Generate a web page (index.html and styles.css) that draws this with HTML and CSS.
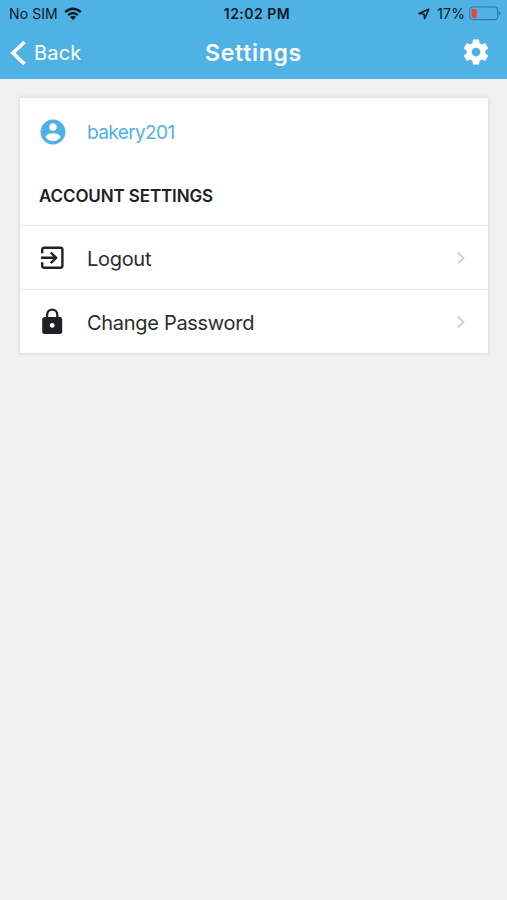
FILE: index.html
```html
<!DOCTYPE html>
<html lang="en">
<head>
<meta charset="utf-8">
<title>Settings</title>
<link rel="stylesheet" href="styles.css">
</head>
<body>
<header class="header">
  <div class="status">
    <div class="carrier"><span class="carrier-name">No SIM</span>
      <svg class="wifi" width="18" height="14" viewBox="0 0 18 14"><g fill="none" stroke="#0b1a24" stroke-width="2.4"><path d="M1.2 5.1Q9-1.7 16.8 5.1"/><path d="M4.1 8.2Q9 3.9 13.9 8.2"/></g><path d="M6 10Q9 7.6 12 10L9 13Z" fill="#0b1a24"/></svg>
    </div>
    <time class="time">12:02 PM</time>
    <div class="power">
      <svg class="location" width="12" height="12" viewBox="0 0 12 12"><path d="M1 5.5 10.8 1.2 6.6 10.8 6 6Z" fill="none" stroke="#0b1a24" stroke-width="1.5" stroke-linejoin="round"/></svg>
      <span class="percent">17%</span>
      <svg class="battery" width="32" height="15" viewBox="0 0 32 15"><rect x=".8" y="1" width="27.8" height="12.6" rx="3.2" fill="none" stroke="#35789c" stroke-width="1.1"/><rect x="2.7" y="2.9" width="5" height="8.9" rx="1.2" fill="#f53b38"/><path d="M29.7 5.2q2 .5 2 2.1t-2 2.1z" fill="#35789c"/></svg>
    </div>
  </div>
  <nav class="nav">
    <a class="back"><svg class="back-arrow" width="17" height="26" viewBox="0 0 17 26"><path d="M14.5 2 3 13 14.5 24" fill="none" stroke="#fff" stroke-width="3.7"/></svg><span class="back-label">Back</span></a>
    <h1 class="title">Settings</h1>
    <svg class="gear" width="30" height="30" viewBox="0 0 24 24" fill="#fff"><path d="M19.43 12.98c.04-.32.07-.64.07-.98s-.03-.66-.07-.98l2.11-1.65c.19-.15.24-.42.12-.64l-2-3.46c-.12-.22-.39-.3-.61-.22l-2.49 1c-.52-.4-1.08-.73-1.69-.98l-.38-2.65C14.46 2.18 14.25 2 14 2h-4c-.25 0-.46.18-.49.42l-.38 2.65c-.61.25-1.17.59-1.69.98l-2.49-1c-.23-.09-.49 0-.61.22l-2 3.46c-.13.22-.07.49.12.64l2.11 1.65c-.04.32-.07.65-.07.98s.03.66.07.98l-2.11 1.65c-.19.15-.24.42-.12.64l2 3.46c.12.22.39.3.61.22l2.49-1c.52.4 1.08.73 1.69.98l.38 2.65c.03.24.24.42.49.42h4c.25 0 .46-.18.49-.42l.38-2.65c.61-.25 1.17-.59 1.69-.98l2.49 1c.23.09.49 0 .61-.22l2-3.46c.12-.22.07-.49-.12-.64l-2.11-1.65zM12 15.5c-1.93 0-3.5-1.57-3.5-3.5s1.57-3.5 3.5-3.5 3.5 1.57 3.5 3.5-1.57 3.5-3.5 3.5z"/></svg>
  </nav>
</header>
<main class="card">
  <div class="user">
    <svg class="icon" width="30" height="30" viewBox="0 0 24 24" fill="#50b1e5"><path d="M12 2C6.48 2 2 6.48 2 12s4.48 10 10 10 10-4.48 10-10S17.52 2 12 2zm0 3c1.66 0 3 1.34 3 3s-1.34 3-3 3-3-1.34-3-3 1.34-3 3-3zm0 14.2c-2.5 0-4.71-1.28-6-3.22.03-1.99 4-3.08 6-3.08 1.99 0 5.97 1.09 6 3.08-1.29 1.94-3.5 3.22-6 3.22z"/></svg>
    <span class="user-name">bakery201</span>
  </div>
  <h2 class="section"><span>ACCOUNT SETTINGS</span></h2>
  <a class="row">
    <svg class="icon" width="30" height="30" viewBox="0 0 30 30"><path d="M4.2 10.2V6.8Q4.2 4.7 6.3 4.7H22.3Q24.4 4.7 24.4 6.8V22.7Q24.4 24.8 22.3 24.8H6.3Q4.2 24.8 4.2 22.7V19.2M3 14.8H18M12.8 9.5 18.1 14.8 12.8 20.1" fill="none" stroke="#202124" stroke-width="2.4"/></svg>
    <span class="logout">Logout</span>
    <svg class="chevron" width="10" height="14" viewBox="0 0 10 14"><path d="M2 1.5 7.5 7 2 12.5" fill="none" stroke="#cfcfd1" stroke-width="1.8"/></svg>
  </a>
  <a class="row">
    <svg class="icon" width="30" height="30" viewBox="0 0 30 30"><path d="M9.1 11V7.7a5.1 5.1 0 0 1 10.2 0V11" fill="none" stroke="#202124" stroke-width="2.3"/><path fill="#202124" fill-rule="evenodd" d="M6.7 10H21.7Q24.2 10 24.2 12.5V24.4Q24.2 26.9 21.7 26.9H6.7Q4.2 26.9 4.2 24.4V12.5Q4.2 10 6.7 10ZM14.2 16a2.4 2.4 0 1 0 .01 0Z"/></svg>
    <span class="password">Change Password</span>
    <svg class="chevron" width="10" height="14" viewBox="0 0 10 14"><path d="M2 1.5 7.5 7 2 12.5" fill="none" stroke="#cfcfd1" stroke-width="1.8"/></svg>
  </a>
</main>
</body>
</html>
```
FILE: styles.css
```css
* { box-sizing: border-box; }
body {
  margin: 0;
  min-height: 900px;
  background: #f1f1f1;
  color: #2b2c2e;
  font-family: Inter, "Liberation Sans", sans-serif;
}
svg { display: block; flex: none; }
span, time, h1 { white-space: nowrap; }
.header { height: 79px; background: #50b1e5; }
.status, .nav {
  display: grid;
  grid-template-columns: 1fr auto 1fr;
  align-items: center;
}
.status { height: 27px; padding: 0 6px 0 9px; color: #0b1a24; }
.carrier, .power { display: flex; align-items: center; }
.carrier-name { font-size: 14px; letter-spacing: .1px; }
.wifi { margin-left: 6px; }
.time { font-size: 14px; font-weight: 600; letter-spacing: .5px; padding-left: 4px; }
.power { justify-content: flex-end; }
.location { margin-right: 7px; }
.percent { font-size: 14px; letter-spacing: .1px; margin-right: 4px; }
.nav { height: 52px; padding: 0 16px 0 10px; color: #fff; }
.back { display: flex; align-items: center; }
.back-arrow { margin-bottom: 1px; }
.back-label { font-size: 20px; letter-spacing: .2px; margin-left: 7px; }
.title { margin: 0; padding-left: 6px; font-size: 23px; font-weight: 600; letter-spacing: .7px; }
.gear { justify-self: end; margin-bottom: 2px; }
.card {
  margin: 19px 19px 0 20px;
  background: #fff;
  box-shadow: 0 0 3px 1px #d9dadc;
}
.user { display: flex; align-items: center; height: 67px; padding-left: 18px; color: #50b1e5; }
.user-name { margin-left: 19px; padding-top: 2px; font-size: 19px; letter-spacing: -.6px; }
.section {
  display: flex;
  align-items: center;
  margin: 0;
  height: 60px;
  padding: 2px 0 0 19px;
  font-size: 17px;
  font-weight: 600;
  letter-spacing: -.12px;
  color: #202124;
}
.row { display: flex; align-items: center; height: 64px; padding: 0 22px 0 18px; border-top: 1px solid #e6e7e9; }
.logout, .password { margin-left: 19px; padding-top: 2px; font-size: 20px; letter-spacing: -.3px; }
.chevron { margin-left: auto; }
```
